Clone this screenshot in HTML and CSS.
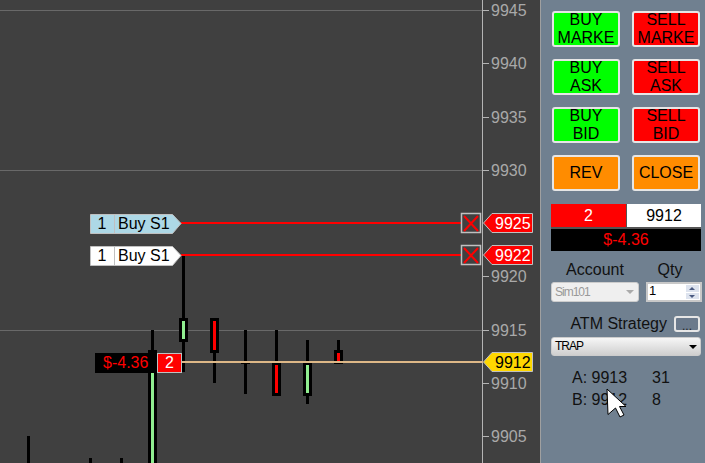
FILE: index.html
```html
<!DOCTYPE html>
<html lang="en">
<head>
  <meta charset="UTF-8">
  <meta name="viewport" content="width=device-width, initial-scale=1.0">
  <title>Chart Trader</title>
  <link rel="stylesheet" href="styles.css">
</head>
<body>
  <div class="app">
    <svg class="chart" width="540" height="463" viewBox="0 0 540 463">
      <!-- grid and price axis -->
      <path class="grid" d="M0 10.5H482M0 170.5H482M0 330.5H482"/>
      <path class="axis" d="M482.5 0V463M482 10.5H489M482 63.5H489M482 117.5H489M482 170.5H489M482 276.5H489M482 330.5H489M482 383.5H489M482 436.5H489"/>
      <text class="axis-label" x="491" y="16">9945</text>
      <text class="axis-label" x="491" y="69">9940</text>
      <text class="axis-label" x="491" y="123">9935</text>
      <text class="axis-label" x="491" y="176">9930</text>
      <text class="axis-label" x="491" y="282">9920</text>
      <text class="axis-label" x="491" y="336">9915</text>
      <text class="axis-label" x="491" y="389">9910</text>
      <text class="axis-label" x="491" y="442">9905</text>

      <!-- candles -->
      <path class="wick" d="M28.5 436V463M90.5 458V463M121.5 458V463M152.5 330V350M183.5 256V372M214.5 353V383M245.5 330V394M276.5 330V362M307.5 340V404M338.5 340V350"/>
      <rect class="body" x="148" y="350" width="9" height="120"/>
      <rect class="up" x="151" y="353" width="3" height="117"/>
      <rect class="body" x="179" y="318" width="9" height="24"/>
      <rect class="up" x="182" y="321" width="3" height="18"/>
      <rect class="body" x="210" y="318" width="9" height="35"/>
      <rect class="down" x="213" y="321" width="3" height="29"/>
      <rect class="body" x="241" y="363" width="9" height="1"/>
      <rect class="body" x="272" y="362" width="9" height="34"/>
      <rect class="down" x="275" y="365" width="3" height="28"/>
      <rect class="body" x="303" y="362" width="9" height="34"/>
      <rect class="up" x="306" y="365" width="3" height="28"/>
      <rect class="body" x="334" y="350" width="9" height="14"/>
      <rect class="down" x="337" y="353" width="3" height="8"/>

      <!-- working orders -->
      <path class="order-line" d="M181 223H461M181 255H461"/>
      <polygon class="tag tag-blue" points="90.5,214.5 172.5,214.5 181,223.5 172.5,233.5 90.5,233.5"/>
      <path class="tag-div" d="M114.5 215V233"/>
      <text class="tag-text" x="102" y="229" text-anchor="middle">1</text>
      <text class="tag-text" x="118" y="229">Buy S1</text>
      <polygon class="tag tag-white" points="90.5,246.5 172.5,246.5 181,255.5 172.5,265.5 90.5,265.5"/>
      <path class="tag-div" d="M114.5 247V265"/>
      <text class="tag-text" x="102" y="261" text-anchor="middle">1</text>
      <text class="tag-text" x="118" y="261">Buy S1</text>

      <rect class="close-box" x="461.5" y="213.5" width="19" height="19"/>
      <path class="close-x" d="M464 216L478 231M478 216L464 231"/>
      <rect class="close-box" x="461.5" y="245.5" width="19" height="19"/>
      <path class="close-x" d="M464 248L478 263M478 248L464 263"/>

      <polygon class="price-tag price-red" points="492,213.5 532.5,213.5 532.5,232.5 492,232.5 483.5,223"/>
      <text class="price-text price-text-light" x="495" y="229">9925</text>
      <polygon class="price-tag price-red" points="492,245.5 532.5,245.5 532.5,264.5 492,264.5 483.5,255"/>
      <text class="price-text price-text-light" x="495" y="261">9922</text>

      <!-- position -->
      <path class="entry-line" d="M182 362H483"/>
      <rect class="pnl-box" x="95" y="353" width="62" height="20"/>
      <text class="pnl-text" x="103" y="368">$-4.36</text>
      <rect class="qty-box" x="157.5" y="353.5" width="24" height="19"/>
      <text class="qty-text" x="169.5" y="368" text-anchor="middle">2</text>
      <polygon class="price-tag price-yellow" points="492,352.5 532.5,352.5 532.5,371.5 492,371.5 483.5,362"/>
      <text class="price-text" x="495" y="368">9912</text>
    </svg>

    <div class="panel">
      <div class="order-buttons">
        <button class="btn btn-buy"><span class="btn-label">BUY<br>MARKE</span></button>
        <button class="btn btn-sell"><span class="btn-label">SELL<br>MARKE</span></button>
        <button class="btn btn-buy"><span class="btn-label">BUY<br>ASK</span></button>
        <button class="btn btn-sell"><span class="btn-label">SELL<br>ASK</span></button>
        <button class="btn btn-buy"><span class="btn-label">BUY<br>BID</span></button>
        <button class="btn btn-sell"><span class="btn-label">SELL<br>BID</span></button>
        <button class="btn btn-orange">REV</button>
        <button class="btn btn-orange">CLOSE</button>
      </div>

      <div class="status">
        <div class="status-qty">2</div>
        <div class="status-price">9912</div>
        <div class="status-pnl">$-4.36</div>
      </div>

      <div class="account-row">
        <div class="account-label">Account</div>
        <div class="qty-label">Qty</div>
        <div class="select select-disabled">Sim101<span class="caret"></span></div>
        <div class="qty-input">
          1
          <div class="spinner">
            <span class="spin-up"></span>
            <span class="spin-down"></span>
          </div>
        </div>
      </div>

      <div class="atm-row">
        <span>ATM Strategy</span>
        <button class="dots-btn">...</button>
      </div>
      <div class="select select-atm">TRAP<span class="caret"></span></div>

      <div class="quotes">
        <span>A: 9913</span><span>31</span>
        <span>B: 9912</span><span>8</span>
      </div>

      <svg class="cursor" width="22" height="30" viewBox="0 0 22 30">
        <polygon points="1,1 20,18.5 13.5,18.5 18,27 14,29 9.5,20 2,26.5"/>
      </svg>
    </div>
  </div>
</body>
</html>
```

FILE: styles.css
```css
body {
  margin: 0;
  background-color: #708090;
  font-family: "Liberation Sans", Arial, sans-serif;
  font-size: 16px;
  color: #111;
  overflow: hidden;
}
.app {
  display: flex;
  width: 705px;
  height: 463px;
}
.chart {
  display: block;
  flex: none;
  background-color: #404040;
}
.chart text {
  font-size: 16px;
}
.grid {
  stroke: #696969;
  stroke-width: 1;
  fill: none;
}
.axis {
  stroke: #b4b4b4;
  stroke-width: 1;
  fill: none;
}
.chart .axis-label {
  fill: #a9a9a9;
}
.wick {
  stroke: #000;
  stroke-width: 3;
  fill: none;
}
.body {
  fill: #000;
}
.up {
  fill: #90ee90;
}
.down {
  fill: #f00;
}
.order-line {
  stroke: #f00;
  stroke-width: 2;
  fill: none;
}
.entry-line {
  stroke: #deb887;
  stroke-width: 2;
  fill: none;
}
.tag {
  stroke: #c0c0c0;
  stroke-width: 1;
}
.tag-blue {
  fill: #add8e6;
}
.tag-white {
  fill: #fff;
}
.tag-div {
  stroke: #c0c0c0;
  stroke-width: 1;
}
.chart .tag-text {
  fill: #000;
}
.close-box {
  fill: #404040;
  stroke: #c0c0c0;
  stroke-width: 1.5;
}
.close-x {
  stroke: #f00;
  stroke-width: 2;
  fill: none;
}
.price-tag {
  stroke: #c0c0c0;
  stroke-width: 1;
}
.price-red {
  fill: #f00;
}
.price-yellow {
  fill: #ffd700;
}
.chart .price-text {
  fill: #000;
}
.chart .price-text-light {
  fill: #fff;
}
.pnl-box {
  fill: #000;
}
.chart .pnl-text {
  fill: #f00;
}
.qty-box {
  fill: #f00;
  stroke: #c0c0c0;
  stroke-width: 1;
}
.chart .qty-text {
  fill: #fff;
}

.panel {
  position: relative;
  flex: 1;
  box-sizing: border-box;
  border-left: 1px solid #a0a0a0;
  padding: 11px 3px 0 10px;
}
.order-buttons {
  display: grid;
  grid-template-columns: 68px 68px;
  grid-auto-rows: 36px;
  gap: 12px;
  margin-left: 1px;
}
.btn {
  display: block;
  box-sizing: border-box;
  width: 68px;
  height: 36px;
  padding: 0;
  border: 2px solid #e6e6e6;
  border-radius: 3px;
  font-family: inherit;
  font-size: 16px;
  line-height: 18px;
  color: #000;
  overflow: hidden;
}
.btn-label {
  display: block;
  margin-top: -2px;
}
.btn-buy {
  background-color: #0f0;
}
.btn-sell {
  background-color: #f00;
}
.btn-orange {
  background-color: #ff8c00;
}
.status {
  display: grid;
  grid-template-columns: 75px 74px;
  grid-template-rows: 23px 22px;
  gap: 2px 1px;
  width: 150px;
  margin-top: 13px;
  background-color: #555;
  text-align: center;
  line-height: 22px;
}
.status-qty {
  background-color: #f00;
  color: #fff;
  line-height: 24px;
}
.status-price {
  background-color: #fff;
  color: #000;
  line-height: 24px;
}
.status-pnl {
  grid-column: 1 / 3;
  background-color: #000;
  color: #f00;
}
.account-row {
  display: grid;
  grid-template-columns: 88px 56px;
  grid-template-rows: 21px 20px;
  column-gap: 7px;
  margin-top: 10px;
  line-height: 18px;
}
.account-label {
  text-align: center;
}
.qty-label {
  padding-right: 8px;
  text-align: center;
}
.select {
  position: relative;
  box-sizing: border-box;
  border: 1px solid #ccc;
  border-radius: 3px;
  padding-left: 3px;
  font-size: 12px;
  letter-spacing: -1px;
}
.select-disabled {
  background-color: #efefef;
  color: #999;
  line-height: 18px;
}
.select-atm {
  width: 150px;
  height: 19px;
  margin-top: 5px;
  background: linear-gradient(#f6f6f6, #cfcfcf);
  color: #000;
  line-height: 17px;
}
.caret {
  position: absolute;
  top: 7px;
  right: 3px;
  border-style: solid;
  border-width: 4px 4px 0;
  border-color: #000 transparent transparent;
}
.select-disabled .caret {
  right: 4px;
  border-top-color: #aaa;
}
.qty-input {
  position: relative;
  box-sizing: border-box;
  border: 2px solid #c8c8c8;
  background-color: #fff;
  padding-left: 1px;
  font-size: 13px;
  line-height: 14px;
  color: #000;
}
.spinner {
  position: absolute;
  top: 1px;
  right: 1px;
  display: flex;
  flex-direction: column;
  gap: 1px;
  width: 13px;
  height: 14px;
}
.spinner span {
  flex: 1;
  position: relative;
  background-color: #dde3ee;
}
.spinner span::after {
  content: "";
  position: absolute;
  left: 3px;
  top: 2px;
  border-style: solid;
  border-color: transparent;
}
.spin-up::after {
  border-width: 0 3px 3px;
  border-bottom-color: #4a5a80 !important;
}
.spin-down::after {
  border-width: 3px 3px 0;
  border-top-color: #4a5a80 !important;
}
.atm-row {
  display: flex;
  align-items: center;
  justify-content: flex-end;
  gap: 7px;
  width: 149px;
  height: 16px;
  margin-top: 14px;
}
.dots-btn {
  box-sizing: border-box;
  width: 26px;
  height: 16px;
  padding: 3px 0 0;
  border: 2px solid #e6e6e6;
  border-radius: 3px;
  background-color: #6b7a8c;
  font-family: inherit;
  font-size: 12px;
  line-height: 10px;
  color: #222;
}
.quotes {
  display: grid;
  grid-template-columns: 80px auto;
  grid-auto-rows: 22px;
  margin-top: 11px;
  padding-left: 21px;
  line-height: 22px;
}
.cursor {
  position: absolute;
  left: 65px;
  top: 388px;
}
.cursor polygon {
  fill: #fff;
  stroke: #000;
  stroke-width: 1;
}
```
